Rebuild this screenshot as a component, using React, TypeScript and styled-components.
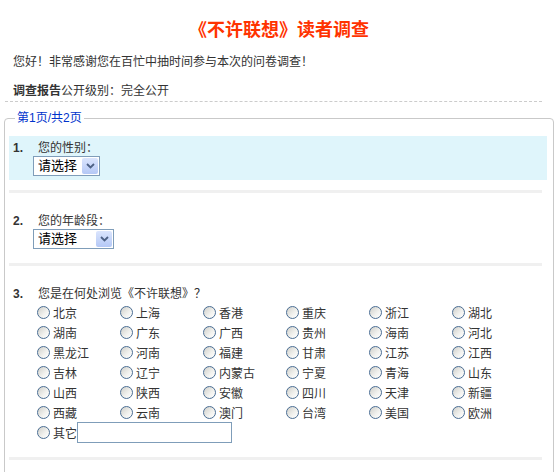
import React from 'react'
import styled, { createGlobalStyle } from 'styled-components'

const GlobalStyle = createGlobalStyle`
body {
    margin: 0;
    background: #fff;
    color: #333;
    font-family: "Liberation Sans", "Noto Sans CJK SC", sans-serif;
    font-size: 12px;
}
`

const regions = [
    '北京', '上海', '香港', '重庆', '浙江', '湖北',
    '湖南', '广东', '广西', '贵州', '海南', '河北',
    '黑龙江', '河南', '福建', '甘肃', '江苏', '江西',
    '吉林', '辽宁', '内蒙古', '宁夏', '青海', '山东',
    '山西', '陕西', '安徽', '四川', '天津', '新疆',
    '西藏', '云南', '澳门', '台湾', '美国', '欧洲',
]

const Chevron = () => (
    <svg width="9" height="6" viewBox="0 0 9 6">
        <path d="M1 1 L4.5 4.5 L8 1" fill="none" stroke="#4d6185" strokeWidth="1.8" />
    </svg>
)

const FakeSelect: React.FC<{ width: number }> = ({ width }) => (
    <SelectBox $width={width}>
        <SelectText>请选择</SelectText>
        <SelectArrow><Chevron /></SelectArrow>
    </SelectBox>
)

const App: React.FC = () => {
    return (
        <Page>
            <GlobalStyle />
            <Title>《不许联想》读者调查</Title>
            <Intro>您好！非常感谢您在百忙中抽时间参与本次的问卷调查！</Intro>
            <Report><b>调查报告</b>公开级别：完全公开</Report>

            <Sheet>
                <Legend>第1页/共2页</Legend>

                <Question $highlight>
                    <QTitle><Num>1.</Num>您的性别：</QTitle>
                    <FakeSelect width={67} />
                </Question>
                <Divider />

                <Question>
                    <QTitle><Num>2.</Num>您的年龄段：</QTitle>
                    <FakeSelect width={81} />
                </Question>
                <Divider />

                <Question>
                    <QTitle><Num>3.</Num>您是在何处浏览《不许联想》？</QTitle>
                    <Choices>
                        {regions.map((r) => (
                            <Option key={r}><Radio />{r}</Option>
                        ))}
                        <OtherRow>
                            <Radio />其它<OtherInput type="text" />
                        </OtherRow>
                    </Choices>
                </Question>
                <Divider />
            </Sheet>
        </Page>
    )
}

export default App

const Page = styled.div`
    padding: 0 4px;
`

const Title = styled.h1`
    margin: 0;
    padding-top: 21px;
    font-size: 18px;
    line-height: 18px;
    font-weight: bold;
    color: #f30;
    text-align: center;
`

const Intro = styled.p`
    margin: 13px 0 0 9px;
    line-height: 20px;
`

const Report = styled.div`
    margin: 9px 12px 0 1px;
    padding-left: 8px;
    line-height: 20px;
    border-bottom: 1px dashed #ccc;
    b {
        font-weight: bold;
    }
`

const Sheet = styled.fieldset`
    margin: 9px 0 0;
    min-width: 0;
    padding: 11px 6px 30px 4px;
    border: 1px solid #c9c9c9;
    border-radius: 4px;
`

const Legend = styled.legend`
    margin-left: 6px;
    padding: 0 2px;
    color: #0033cc;
    font-size: 12px;
    line-height: 14px;
`

const Question = styled.div<{ $highlight?: boolean }>`
    background: ${(p) => (p.$highlight ? '#dff5fb' : 'transparent')};
    padding: 5px 4px 4px;
`

const QTitle = styled.div`
    display: flex;
    line-height: 15px;
`

const Num = styled.span`
    width: 25px;
    font-weight: bold;
`

const SelectBox = styled.div<{ $width: number }>`
    margin-left: 20px;
    width: ${(p) => p.$width}px;
    height: 20px;
    box-sizing: border-box;
    border: 1px solid #7f9db9;
    background: #fff;
    display: flex;
    align-items: center;
`

const SelectText = styled.span`
    flex: 1;
    padding-left: 4px;
    font-size: 13px;
    color: #000;
    line-height: 16px;
`

const SelectArrow = styled.span`
    width: 16px;
    height: 16px;
    margin-right: 1px;
    border-radius: 2px;
    background: linear-gradient(#dbe5fd, #b4c8f6);
    display: flex;
    align-items: center;
    justify-content: center;
`

const Divider = styled.div`
    height: 3px;
    background: #f0f0f0;
    margin: 10px 5px 16px 0;
`

const Choices = styled.div`
    padding-left: 24px;
    display: grid;
    grid-template-columns: repeat(6, 83px);
`

const Option = styled.label`
    display: flex;
    align-items: center;
    gap: 3px;
    height: 20px;
    color: #333;
`

const OtherRow = styled(Option)`
    grid-column: 1 / -1;
    height: 21px;
`

const Radio = styled.span`
    width: 13px;
    height: 13px;
    box-sizing: border-box;
    border-radius: 50%;
    border: 1px solid #4a6d93;
    background: linear-gradient(135deg, #cfcfca 0%, #f2f2ef 60%, #fff 100%);
    flex-shrink: 0;
`

const OtherInput = styled.input`
    margin: 0 0 0 -3px;
    width: 155px;
    height: 21px;
    box-sizing: border-box;
    border: 1px solid #7f9db9;
    padding: 0 2px;
    font-size: 12px;
`
